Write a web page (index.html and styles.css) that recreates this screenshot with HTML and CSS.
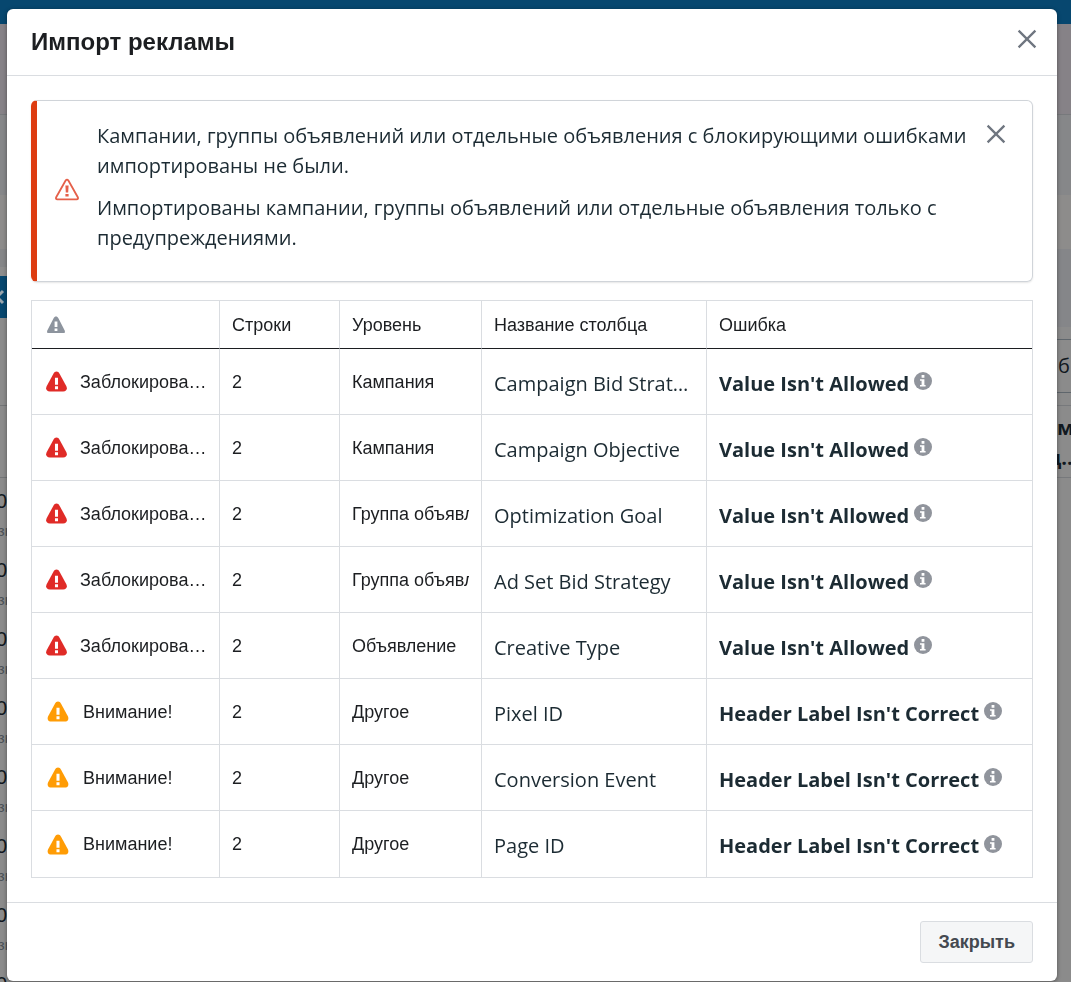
FILE: index.html
```html
<!DOCTYPE html>
<html lang="ru">
<head>
  <meta charset="UTF-8">
  <title>Импорт рекламы</title>
  <meta name="viewport" content="width=device-width, initial-scale=1.0">
  <link rel="stylesheet" href="styles.css">
</head>
<body>

  <svg class="sprite" aria-hidden="true">
    <symbol id="icon-close" viewBox="0 0 20 20">
      <path d="M3 3L17 17M17 3L3 17" fill="none" stroke="currentColor" stroke-width="1.9"/>
    </symbol>
    <symbol id="icon-alert" viewBox="0 0 22 22">
      <path d="M11 .5C12.4 .5 13.4 1.4 14.2 2.8L21.2 15.6C22.8 18.8 21.4 21.5 18 21.5H4C.6 21.5 -.8 18.8 .8 15.6L7.8 2.8C8.6 1.4 9.6 .5 11 .5Z" fill="currentColor"/>
      <path d="M9.4 7H12.6V14.4H9.4ZM9.4 16H12.6V19H9.4Z" fill="#fff"/>
    </symbol>
    <symbol id="icon-head" viewBox="0 0 18 18">
      <path d="M9 .5C10 .5 10.8 1 11.4 2.2L17.7 14.6C18.2 16 17.8 17 17 17H1C.2 17 -.2 16 .3 14.6L6.6 2.2C7.2 1 8 .5 9 .5Z" fill="currentColor"/>
      <path d="M7.6 5.5H10.4V11H7.6ZM7.6 12.5H10.4V15H7.6Z" fill="#fff"/>
    </symbol>
    <symbol id="icon-outline" viewBox="0 0 24 24">
      <path d="M10.6 2.6Q12 .7 13.4 2.6L22.8 19.2Q23.6 21.2 21.6 21.4H2.4Q.4 21.2 1.2 19.2Z" fill="none" stroke="currentColor" stroke-width="1.8"/>
      <path d="M10.4 7.5H13.6L13.2 14.5H10.8ZM10.4 16H13.6V18.6H10.4Z" fill="currentColor"/>
    </symbol>
    <symbol id="icon-info" viewBox="0 0 18 18">
      <circle cx="9" cy="9" r="9" fill="currentColor"/>
      <path d="M7.6 3H10.4V5.8H7.6ZM6 7.2H10.4V13H11.6V14.6H6V13H7.6V8.8H6Z" fill="#fff"/>
    </symbol>
  </svg>

  <div class="page">
    <div class="topbar"></div>
    <div class="band band-account"></div>
    <div class="band band-tabs"></div>
    <div class="band band-search"></div>
    <div class="columns">
      <div class="left-edge">
        <div class="filter-bar"></div>
        <div class="collapse">
          <svg viewBox="0 0 10 16"><path d="M8 2L2 8L8 14" fill="none" stroke="currentColor" stroke-width="3"/></svg>
        </div>
        <div class="list-head"></div>
        <div class="list-sub"></div>
        <div class="item"><b>0</b><span>зн</span></div>
        <div class="item"><b>0</b><span>зн</span></div>
        <div class="item"><b>0</b><span>зн</span></div>
        <div class="item"><b>0</b><span>зн</span></div>
        <div class="item"><b>0</b><span>зн</span></div>
        <div class="item"><b>0</b><span>зн</span></div>
        <div class="item"><b>0</b><span>зн</span></div>
        <div class="item"><b>0</b><span>зн</span></div>
      </div>
      <div class="right-edge">
        <div class="toolbar"></div>
        <div class="picker">б</div>
        <div class="col-title"><div>м</div><div class="cut">д...</div></div>
      </div>
    </div>
  </div>

  <div class="modal" role="dialog" aria-labelledby="modal-title">
    <header class="modal-header">
      <h1 id="modal-title">Импорт рекламы</h1>
      <button class="icon-btn" type="button" aria-label="Закрыть окно"><svg class="close-lg"><use href="#icon-close"/></svg></button>
    </header>

    <div class="modal-body">
      <div class="notice">
        <svg class="notice-icon"><use href="#icon-outline"/></svg>
        <div class="notice-text">
          <p>Кампании, группы объявлений или отдельные объявления с блокирующими ошибками импортированы не были.</p>
          <p>Импортированы кампании, группы объявлений или отдельные объявления только с предупреждениями.</p>
        </div>
        <button class="icon-btn" type="button" aria-label="Скрыть сообщение"><svg class="close-sm"><use href="#icon-close"/></svg></button>
      </div>

      <table class="errors">
        <thead>
          <tr>
            <th class="col-status" aria-label="Статус"><svg class="head-icon"><use href="#icon-head"/></svg></th>
            <th class="col-rows">Строки</th>
            <th class="col-level">Уровень</th>
            <th class="col-name">Название столбца</th>
            <th>Ошибка</th>
          </tr>
        </thead>
        <tbody>
          <tr>
            <td><div class="status blocked"><svg><use href="#icon-alert"/></svg><span>Заблокировано</span></div></td>
            <td>2</td>
            <td><div class="level">Кампания</div></td>
            <td class="name">Campaign Bid Strategy</td>
            <td><div class="error">Value Isn't Allowed<svg><use href="#icon-info"/></svg></div></td>
          </tr>
          <tr>
            <td><div class="status blocked"><svg><use href="#icon-alert"/></svg><span>Заблокировано</span></div></td>
            <td>2</td>
            <td><div class="level">Кампания</div></td>
            <td class="name">Campaign Objective</td>
            <td><div class="error">Value Isn't Allowed<svg><use href="#icon-info"/></svg></div></td>
          </tr>
          <tr>
            <td><div class="status blocked"><svg><use href="#icon-alert"/></svg><span>Заблокировано</span></div></td>
            <td>2</td>
            <td><div class="level">Группа объявлений</div></td>
            <td class="name">Optimization Goal</td>
            <td><div class="error">Value Isn't Allowed<svg><use href="#icon-info"/></svg></div></td>
          </tr>
          <tr>
            <td><div class="status blocked"><svg><use href="#icon-alert"/></svg><span>Заблокировано</span></div></td>
            <td>2</td>
            <td><div class="level">Группа объявлений</div></td>
            <td class="name">Ad Set Bid Strategy</td>
            <td><div class="error">Value Isn't Allowed<svg><use href="#icon-info"/></svg></div></td>
          </tr>
          <tr>
            <td><div class="status blocked"><svg><use href="#icon-alert"/></svg><span>Заблокировано</span></div></td>
            <td>2</td>
            <td><div class="level">Объявление</div></td>
            <td class="name">Creative Type</td>
            <td><div class="error">Value Isn't Allowed<svg><use href="#icon-info"/></svg></div></td>
          </tr>
          <tr>
            <td><div class="status warning"><svg><use href="#icon-alert"/></svg><span>Внимание!</span></div></td>
            <td>2</td>
            <td><div class="level">Другое</div></td>
            <td class="name">Pixel ID</td>
            <td><div class="error">Header Label Isn't Correct<svg><use href="#icon-info"/></svg></div></td>
          </tr>
          <tr>
            <td><div class="status warning"><svg><use href="#icon-alert"/></svg><span>Внимание!</span></div></td>
            <td>2</td>
            <td><div class="level">Другое</div></td>
            <td class="name">Conversion Event</td>
            <td><div class="error">Header Label Isn't Correct<svg><use href="#icon-info"/></svg></div></td>
          </tr>
          <tr>
            <td><div class="status warning"><svg><use href="#icon-alert"/></svg><span>Внимание!</span></div></td>
            <td>2</td>
            <td><div class="level">Другое</div></td>
            <td class="name">Page ID</td>
            <td><div class="error">Header Label Isn't Correct<svg><use href="#icon-info"/></svg></div></td>
          </tr>
        </tbody>
      </table>
    </div>

    <footer class="modal-footer">
      <button class="btn" type="button">Закрыть</button>
    </footer>
  </div>

</body>
</html>
```
FILE: styles.css
```css
* {
  box-sizing: border-box;
}

body {
  margin: 0;
  padding: 9px 14px 1px 7px;
  font-family: Arial, 'Liberation Sans', sans-serif;
  font-size: 18px;
  line-height: 24px;
  color: #1c1e21;
  background-color: #8b8b8b;
}

.sprite {
  display: none;
}

/* dimmed page behind the dialog */
.page {
  position: fixed;
  inset: 0;
  overflow: hidden;
  color: #111820;
  background-color: #8b8b8b;
}

.topbar {
  height: 24px;
  background-color: #07476f;
}

.band-account {
  height: 91px;
  background-color: #868287;
  border-bottom: 1px solid #77797c;
}

.band-tabs {
  height: 80px;
  background-color: #868789;
}

.band-search {
  height: 54px;
  background-color: #8d8c8b;
}

.columns {
  display: flex;
  justify-content: space-between;
}

.left-edge {
  width: 7px;
}

.right-edge {
  width: 14px;
}

.filter-bar {
  height: 27px;
  background-color: #858688;
  border-bottom: 9px solid #8d8d8d;
}

.collapse {
  display: flex;
  align-items: center;
  justify-content: flex-end;
  height: 42px;
  color: #9aa5ad;
  background-color: #07476f;
}

.collapse svg {
  flex: none;
  width: 10px;
  height: 16px;
  margin-right: 2px;
}

.list-head {
  height: 88px;
  border-bottom: 1px solid #737577;
}

.list-sub {
  height: 72px;
  border-bottom: 1px solid #737577;
}

.item {
  display: flex;
  flex-direction: column;
  align-items: flex-end;
  height: 69px;
  padding-top: 11px;
  overflow: hidden;
}

.item b {
  font-size: 20px;
  font-weight: normal;
}

.item span {
  margin: 6px -6px 0 0;
  font-size: 15px;
  color: #4a5157;
}

.toolbar {
  height: 78px;
  background-color: #858689;
}

.picker {
  height: 54px;
  margin: 12px 0;
  padding-left: 1px;
  border: solid #5f666c;
  border-width: 1px 0;
  font-family: 'Segoe UI', 'Open Sans', sans-serif;
  font-size: 20px;
  line-height: 52px;
}

.col-title {
  height: 73px;
  padding-top: 7px;
  border: solid #77797c;
  border-width: 1px 0;
  font-family: 'Segoe UI', 'Open Sans', sans-serif;
  font-size: 20px;
  font-weight: bold;
  line-height: 30px;
}

.cut {
  margin-left: -9px;
}

/* dialog */
.modal {
  position: relative;
  background-color: #fff;
  border-radius: 6px;
  box-shadow: 0 1px 4px rgba(0, 0, 0, 0.4);
}

.modal-header {
  display: flex;
  align-items: center;
  justify-content: space-between;
  height: 67px;
  padding: 0 18px 0 24px;
  border-bottom: 1px solid #dadde1;
}

.modal-header h1 {
  margin: 0;
  font-size: 24px;
  line-height: 28px;
}

.icon-btn {
  display: flex;
  padding: 0;
  border: none;
  background: none;
  color: #6f7680;
  cursor: pointer;
}

.modal-header .icon-btn {
  padding-bottom: 6px;
}

.close-lg {
  width: 24px;
  height: 24px;
}

.close-sm {
  width: 24px;
  height: 24px;
}

.modal-body {
  padding: 24px;
}

.notice {
  display: flex;
  align-items: flex-start;
  margin-bottom: 18px;
  padding: 14px 24px 16px 18px;
  border: 1px solid #d0d4d9;
  border-left: 6px solid #dd3c10;
  border-radius: 6px;
  box-shadow: 0 1px 2px rgba(0, 0, 0, 0.1);
}

.notice .icon-btn {
  padding-top: 7px;
}

.notice-icon {
  flex: none;
  align-self: center;
  width: 24px;
  height: 24px;
  color: #e5604a;
}

.notice-text {
  flex: 1;
  padding: 6px 16px 0 18px;
  font-family: 'Segoe UI', 'Open Sans', sans-serif;
  font-size: 20px;
  line-height: 30px;
  color: #1c2b33;
}

.notice-text p {
  margin: 0 0 12px;
}

.errors {
  width: 100%;
  table-layout: fixed;
  border: 1px solid #dadde1;
  border-collapse: separate;
  border-spacing: 0;
}

.errors th,
.errors td {
  height: 66px;
  padding: 0 12px;
  border: solid #dadde1;
  border-width: 0 1px 1px 0;
  font-weight: normal;
  text-align: left;
  white-space: nowrap;
  overflow: hidden;
}

.errors th {
  height: 48px;
  border-bottom-color: #1c1e21;
}

.errors th:last-child,
.errors td:last-child {
  border-right: none;
}

.errors tr:last-child td {
  border-bottom: none;
}

.col-status { width: 188px; }
.col-rows { width: 120px; }
.col-level { width: 142px; }
.col-name { width: 225px; }

.head-icon {
  display: block;
  width: 18px;
  height: 18px;
  margin-left: 3px;
  color: #8d949e;
}

.status {
  display: flex;
  align-items: center;
  gap: 13px;
  margin-left: 2px;
}

.status svg {
  flex: none;
  width: 21px;
  height: 21px;
}

.status span {
  overflow: hidden;
  text-overflow: ellipsis;
}

.blocked svg { color: #e02b27; }
.warning svg { width: 24px; color: #ff9c05; }

.level {
  overflow: hidden;
}

.name,
.error {
  font-family: 'Segoe UI', 'Open Sans', sans-serif;
  font-size: 20px;
  line-height: 30px;
  color: #1c2b33;
}

.errors .name {
  padding-top: 4px;
  text-overflow: ellipsis;
}

.error {
  display: flex;
  align-items: center;
  gap: 5px;
  padding-top: 4px;
  font-weight: bold;
}

.error svg {
  flex: none;
  width: 18px;
  height: 18px;
  margin-bottom: 5px;
  color: #90949c;
}

.modal-footer {
  display: flex;
  justify-content: flex-end;
  padding: 18px 24px;
  border-top: 1px solid #dadde1;
}

.btn {
  height: 42px;
  padding: 0 17px;
  border: 1px solid #dadde1;
  border-radius: 3px;
  background-color: #f5f6f7;
  font-family: inherit;
  font-size: 18px;
  font-weight: bold;
  color: #444950;
  cursor: pointer;
}
```
